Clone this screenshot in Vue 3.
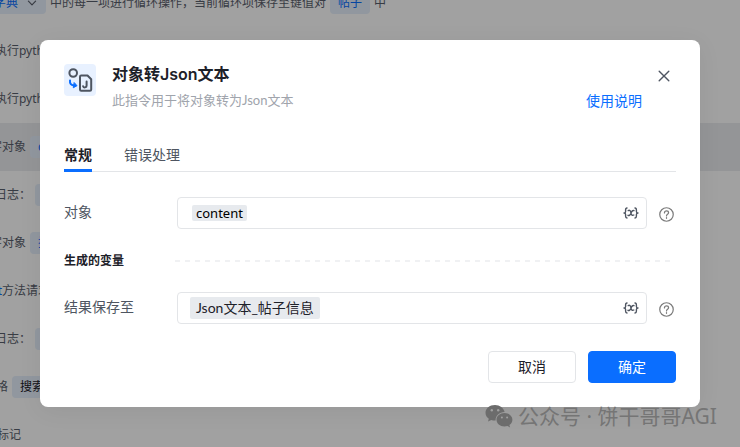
<template>
    <div class="page">
        <ul class="step-list" aria-hidden="true">
            <li
                v-for="step in steps"
                :key="step.id"
                class="step"
                :class="{ active: step.active }"
            >
                <span class="lead" :style="{ width: `${step.leadWidth}px` }">
                    <span v-if="step.dropdown" class="chip chip-select">
                        {{ step.lead }}
                        <svg class="chevron" viewBox="0 0 10 10">
                            <path d="M2 3.5 5 6.5 8 3.5" />
                        </svg>
                    </span>
                    <template v-else>
                        <span v-if="step.link" class="step-link">{{ step.link }}</span>{{ step.lead }}
                    </template>
                </span>
                <span v-if="step.middle">{{ step.middle }}</span>
                <span v-if="step.chip" class="chip" :class="{ dark: step.dark }">{{ step.chip }}</span>
                <span v-if="step.tail">{{ step.tail }}</span>
            </li>
        </ul>

        <div class="overlay">
            <section class="dialog" role="dialog" aria-labelledby="dialog-title">
                <header class="dialog-header">
                    <div class="command-icon">
                        <svg viewBox="0 0 32 32">
                            <circle cx="9.200" cy="9" r="3.800" class="ink" />
                            <path
                                class="ink"
                                d="M17.200 11.500h6.300l3.700 3.700v10.300a1.200 1.200 0 0 1-1.200 1.200h-8.800a1.200 1.200 0 0 1-1.200-1.200V12.700a1.200 1.200 0 0 1 1.200-1.200z"
                            />
                            <path class="ink thin" d="M22.600 17.500v4a1.800 1.800 0 0 1-3.500.7" />
                            <path class="accent" d="M6 16.400c-.4 3 1 5 4.600 5.200" />
                            <path class="accent-fill" d="M10.400 18.800 13 21.700 9.600 23.600z" />
                        </svg>
                    </div>
                    <div class="heading">
                        <h1 id="dialog-title">对象转Json文本</h1>
                        <p>此指令用于将对象转为Json文本</p>
                    </div>
                    <a class="manual" href="#manual">使用说明</a>
                    <button class="close" type="button" aria-label="关闭">
                        <svg viewBox="0 0 12 12">
                            <path d="M1.200 1.200 10.800 10.800M10.800 1.200 1.200 10.800" />
                        </svg>
                    </button>
                </header>

                <nav class="tabs" role="tablist">
                    <button
                        v-for="tab in tabs"
                        :key="tab"
                        type="button"
                        role="tab"
                        class="tab"
                        :class="{ current: tab === currentTab }"
                        :aria-selected="tab === currentTab"
                        @click="currentTab = tab"
                    >
                        {{ tab }}
                    </button>
                </nav>

                <form class="form" @submit.prevent>
                    <template v-for="field in fields" :key="field.id">
                        <div v-if="field.section" class="section">
                            <h2>{{ field.section }}</h2>
                            <span class="dashes"></span>
                        </div>
                        <div class="field">
                            <label :for="field.id">{{ field.label }}</label>
                            <div class="control">
                                <span class="tag" :class="{ compact: field.compact }">{{ field.value }}</span>
                                <input :id="field.id" type="text" />
                                <button class="variable" type="button" aria-label="选择变量">
                                    <svg viewBox="0 0 16 12">
                                        <path d="M4 1C2.600 1 2.600 1.600 2.600 3v1.400C2.600 5.400 2 6 1 6c1 0 1.600.6 1.600 1.600V9c0 1.400 0 2 1.400 2" />
                                        <path d="M12 1c1.400 0 1.400.6 1.400 2v1.400c0 1 .6 1.600 1.600 1.600-1 0-1.600.6-1.600 1.600V9c0 1.400 0 2-1.400 2" />
                                        <path d="M5.200 3.600c1.400-.8 2.200.1 2.600 1.700l.4 1.400c.4 1.500 1.300 2.100 2.600 1.300M11 3.600c-1-.5-1.900 0-2.800 1.800L7.700 6.700C6.900 8.300 6 8.900 5 8.300" />
                                    </svg>
                                </button>
                            </div>
                            <button class="help" type="button" aria-label="帮助">
                                <svg viewBox="0 0 16 16">
                                    <circle cx="8" cy="8" r="7.200" />
                                    <path d="M5.800 6.400c0-1.400 1-2.200 2.200-2.200s2.200.8 2.200 2c0 1.500-2.200 1.600-2.200 3.300" />
                                    <path d="M8 11.300v.8" />
                                </svg>
                            </button>
                        </div>
                    </template>

                    <footer class="actions">
                        <button class="btn" type="button">取消</button>
                        <button class="btn primary" type="submit">确定</button>
                    </footer>
                </form>
            </section>
        </div>

        <div class="watermark">
            <svg viewBox="0 0 28 24">
                <path
                    d="M10 1C4.500 1 .5 4.400.5 8.800c0 2.500 1.300 4.500 3.300 6L3 17.600l3.200-1.700c1.200.4 2.500.6 3.800.6h.6c-.3-5 3.800-8.600 9-8.600C18.700 3.900 14.800 1 10 1z"
                />
                <path
                    d="M19.500 9c-4.600 0-8 3-8 6.700s3.400 6.700 8 6.700c1 0 2-.2 2.900-.5l2.700 1.500-.7-2.400c1.900-1.300 3-3.200 3-5.300 0-3.700-3.400-6.700-7.900-6.700z"
                />
                <g class="eyes">
                    <circle cx="6.800" cy="6.200" r="1.200" />
                    <circle cx="13.200" cy="6.200" r="1.200" />
                    <circle cx="16.900" cy="13.600" r="1" />
                    <circle cx="22.100" cy="13.600" r="1" />
                </g>
            </svg>
            <span>公众号 · 饼干哥哥AGI</span>
        </div>
    </div>
</template>

<script setup>
import { ref } from "vue";

const tabs = ["常规", "错误处理"];
const currentTab = ref("常规");

const fields = [
    { id: "source", label: "对象", value: "content", compact: true },
    {
        id: "target",
        label: "结果保存至",
        value: "Json文本_帖子信息",
        section: "生成的变量",
    },
];

// leadWidth is the visible part of the text, the list is scrolled to the right
const steps = [
    {
        id: 1,
        lead: "字典",
        dropdown: true,
        leadWidth: 46,
        middle: "中的每一项进行循环操作，当前循环项保存至键值对",
        chip: "帖子",
        tail: "中",
    },
    { id: 2, lead: "执行pyth", leadWidth: 44 },
    { id: 3, lead: "执行pyth", leadWidth: 44 },
    { id: 4, lead: "字对象", leadWidth: 26, chip: "c", active: true },
    { id: 5, lead: "日志：", leadWidth: 31, chip: "c" },
    { id: 6, lead: "字对象", leadWidth: 26, chip: "搜" },
    { id: 7, link: "t", lead: "方法请求", leadWidth: 50 },
    { id: 8, lead: "日志：", leadWidth: 31, chip: "搜" },
    { id: 9, lead: "表格", leadWidth: 8, chip: "搜索", dark: true },
    { id: 10, lead: "标记", leadWidth: 21 },
];
</script>

<style>
body {
    margin: 0;
}
</style>

<style scoped>
.page {
    position: relative;
    min-height: 100vh;
    overflow: hidden;
    background: #fff;
    font-family: "Noto Sans", "Noto Sans CJK SC", sans-serif;
}

.page * {
    box-sizing: border-box;
}

button,
input {
    font-family: inherit;
    border: none;
    background: none;
    padding: 0;
    margin: 0;
}

svg {
    display: block;
    fill: none;
    stroke-linecap: round;
    stroke-linejoin: round;
}

/* steps behind the dialog */
.step-list {
    position: absolute;
    inset: -21px 0 auto;
    margin: 0;
    padding: 0;
    list-style: none;
}

.step {
    display: flex;
    align-items: center;
    gap: 4px;
    height: 48px;
    font-size: 12px;
    line-height: 20px;
    color: #5a606c;
    white-space: nowrap;
}

.step.active {
    background: #ebedef;
}

.lead {
    display: flex;
    justify-content: flex-end;
    flex: none;
}

.step-link {
    color: #0a6eff;
}

.chip {
    display: flex;
    align-items: center;
    gap: 8px;
    height: 22px;
    padding: 0 8px;
    border-radius: 4px;
    background: #e6effc;
    color: #0a6eff;
}

.chip.dark {
    color: #1d2129;
}

.chevron {
    width: 12px;
    height: 12px;
    stroke: #5a606c;
}

/* dialog */
.overlay {
    position: relative;
    min-height: 100vh;
    padding: 40px;
    box-sizing: border-box;
    background: rgba(0, 0, 0, 0.37);
}

.dialog {
    padding: 24px;
    border-radius: 8px;
    background: #fff;
    box-shadow: 0 4px 24px rgba(0, 0, 0, 0.06);
    color: #1d2129;
}

.dialog-header {
    display: flex;
    align-items: flex-start;
}

.command-icon {
    width: 32px;
    height: 32px;
    margin-right: 16px;
    border-radius: 4px;
    background: #e8f1ff;
}

.command-icon .ink {
    stroke: #4e5561;
    stroke-width: 2;
}

.command-icon .accent {
    stroke: #0a6eff;
    stroke-width: 2;
}

.command-icon .accent-fill {
    fill: #0a6eff;
    stroke: #0a6eff;
}

.heading {
    flex: 1;
}

.heading h1 {
    margin: 0 0 6px;
    font-family: Inter, "Noto Sans CJK SC", sans-serif;
    font-size: 16px;
    line-height: 20px;
    font-weight: 600;
}

.heading p {
    margin: 0;
    font-family: Lato, "Noto Sans CJK SC", sans-serif;
    font-size: 13px;
    line-height: 20px;
    color: #a0a4ac;
}

.manual {
    margin-top: 26px;
    font-size: 14px;
    line-height: 22px;
    color: #0a6eff;
    text-decoration: none;
}

.close {
    margin: 6px 6px 0 16px;
}

.close svg {
    width: 12px;
    height: 12px;
    stroke: #4e5561;
    stroke-width: 1.4;
}

.tabs {
    display: flex;
    gap: 32px;
    margin-top: 32px;
    border-bottom: 1px solid #e3e5e8;
}

.tab {
    height: 28px;
    margin-bottom: -1px;
    padding-bottom: 4px;
    border-bottom: 3px solid transparent;
    font-size: 14px;
    line-height: 20px;
    color: #4e5561;
}

.tab.current {
    border-bottom-color: #0a6eff;
    color: #1d2129;
    font-weight: 600;
}

.form {
    padding-top: 25px;
}

.field {
    display: flex;
    align-items: center;
}

.field label {
    width: 113px;
    padding-bottom: 2px;
    font-size: 14px;
    line-height: 22px;
    color: #4e5561;
}

.control {
    display: flex;
    align-items: center;
    flex: 1;
    height: 32px;
    padding: 0 7px 0 12px;
    border: 1px solid #e3e5e8;
    border-radius: 4px;
}

.control input {
    flex: 1;
    min-width: 0;
    height: 22px;
    outline: none;
    font-size: 14px;
}

.tag {
    padding: 0 6px;
    border-radius: 2px;
    background: #e7eaee;
    font-family: Lato, "Noto Sans CJK SC", sans-serif;
    font-size: 14px;
    line-height: 22px;
    white-space: nowrap;
}

.tag.compact {
    margin-left: 2px;
    padding: 0 4px;
    font-family: "Noto Sans", sans-serif;
    font-size: 13px;
    line-height: 16px;
    color: #000;
}

.variable svg {
    width: 16px;
    height: 12px;
    stroke: #4e5561;
    stroke-width: 1.4;
}

.help {
    margin: 2px 2px 0 12px;
}

.help svg {
    width: 15px;
    height: 15px;
    stroke: #7b7b7b;
    stroke-width: 1.3;
}

.section {
    display: flex;
    align-items: center;
    padding: 22px 4px 21px 0;
}

.section h2 {
    width: 111px;
    margin: 0;
    font-size: 12px;
    line-height: 20px;
    font-weight: 600;
}

.dashes {
    flex: 1;
    height: 2px;
    background: repeating-linear-gradient(90deg, #f0f1f3 0 5px, transparent 5px 10px);
}

.actions {
    display: flex;
    justify-content: flex-end;
    gap: 12px;
    margin-top: 27px;
}

.btn {
    width: 88px;
    height: 32px;
    border: 1px solid #e3e5e8;
    border-radius: 4px;
    font-size: 14px;
    line-height: 22px;
    color: #1d2129;
}

.btn.primary {
    border-color: #0a6eff;
    background: #0a6eff;
    color: #fff;
}

.watermark {
    position: absolute;
    right: 23px;
    bottom: 17px;
    display: flex;
    align-items: center;
    gap: 5px;
    font-size: 21px;
    line-height: 28px;
    color: #757575;
}

.watermark svg {
    width: 28px;
    height: 24px;
    fill: #6c6c6c;
}

.watermark .eyes {
    fill: #a0a0a0;
}
</style>
